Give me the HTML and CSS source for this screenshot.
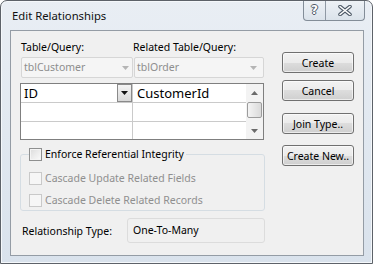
FILE: index.html
```html
<!DOCTYPE html>
<html lang="en">
<head>
    <meta charset="UTF-8">
    <meta name="viewport" content="width=device-width, initial-scale=1.0">
    <title>Edit Relationships</title>
    <link rel="stylesheet" href="styles.css">
</head>
<body>
    <div class="window">
        <div class="titlebar">
            <span class="title">Edit Relationships</span>
            <div class="caption-btns">
                <span class="cap-btn help">?</span>
                <span class="cap-btn close">
                    <svg width="14" height="11" viewBox="0 0 14 11">
                        <path d="M2 1.5 L12 9.5 M12 1.5 L2 9.5" stroke="#4e5a67" stroke-width="3.6" stroke-linecap="round"/>
                        <path d="M2 1.5 L12 9.5 M12 1.5 L2 9.5" stroke="#ffffff" stroke-width="1.6" stroke-linecap="round"/>
                    </svg>
                </span>
            </div>
        </div>

        <div class="client">
            <div class="main">
                <div class="labels">
                    <span class="label-left">Table/Query:</span>
                    <span>Related Table/Query:</span>
                </div>

                <div class="combos">
                    <div class="combo combo-left">
                        <span>tblCustomer</span>
                        <svg class="combo-arrow" width="7" height="4" viewBox="0 0 7 4"><path d="M0 0 H7 L3.5 4 Z" fill="#b5b5b5"/></svg>
                    </div>
                    <div class="combo combo-right">
                        <span>tblOrder</span>
                        <svg class="combo-arrow" width="7" height="4" viewBox="0 0 7 4"><path d="M0 0 H7 L3.5 4 Z" fill="#b5b5b5"/></svg>
                    </div>
                </div>

                <!-- Field mapping grid -->
                <div class="grid">
                    <div class="cells">
                        <div class="cell cell-first">
                            <span>ID</span>
                            <span class="drop-btn">
                                <svg width="7" height="4" viewBox="0 0 7 4"><path d="M0 0 H7 L3.5 4 Z" fill="#111"/></svg>
                            </span>
                        </div>
                        <div class="cell cell-second">CustomerId</div>
                        <div class="cell cell-first"></div>
                        <div class="cell cell-second"></div>
                        <div class="cell cell-first last"></div>
                        <div class="cell cell-second last"></div>
                    </div>
                    <div class="scrollbar">
                        <span class="scroll-arrow">
                            <svg width="7" height="4" viewBox="0 0 7 4"><path d="M0 4 H7 L3.5 0 Z" fill="#6b6b6b"/></svg>
                        </span>
                        <span class="scroll-thumb"></span>
                        <span class="scroll-track"></span>
                        <span class="scroll-arrow">
                            <svg width="7" height="4" viewBox="0 0 7 4"><path d="M0 0 H7 L3.5 4 Z" fill="#6b6b6b"/></svg>
                        </span>
                    </div>
                </div>

                <fieldset class="integrity">
                    <legend>
                        <label class="check">
                            <span class="box"></span>
                            <span>Enforce Referential Integrity</span>
                        </label>
                    </legend>
                    <div class="check-list">
                        <label class="check disabled">
                            <span class="box"></span>
                            <span>Cascade Update Related Fields</span>
                        </label>
                        <label class="check disabled">
                            <span class="box"></span>
                            <span>Cascade Delete Related Records</span>
                        </label>
                    </div>
                </fieldset>

                <div class="rel-type">
                    <span class="rel-label">Relationship Type:</span>
                    <div class="rel-value">One-To-Many</div>
                </div>
            </div>

            <div class="buttons">
                <button class="btn">Create</button>
                <button class="btn btn-cancel">Cancel</button>
                <button class="btn btn-join">Join Type..</button>
                <button class="btn btn-new">Create New..</button>
            </div>
        </div>
    </div>
</body>
</html>
```

FILE: styles.css
```css
body {
    margin: 0;
    padding: 0;
    font-family: "Noto Sans", "Open Sans", sans-serif;
    font-size: 10.5px;
    color: #000000;
}

.window {
    width: 373px;
    height: 264px;
    box-sizing: border-box;
    border: 1px solid #5d6269;
    border-radius: 7px 7px 0 0;
    background: linear-gradient(#e9eef4, #d9e2ec);
    box-shadow: inset 0 0 0 1px #f5f8fb;
    display: flex;
    flex-direction: column;
    overflow: hidden;
}

.titlebar {
    height: 29px;
    flex-shrink: 0;
    display: flex;
    justify-content: space-between;
    align-items: flex-start;
    padding-left: 11px;
}

.title {
    font-size: 11.3px;
    line-height: 16px;
    padding-top: 7px;
    color: #111111;
}

.caption-btns {
    display: flex;
    height: 20px;
    margin-top: -1px;
    margin-right: 7px;
    border: 1px solid #838d98;
    border-top: none;
    border-radius: 0 0 4px 4px;
    background: linear-gradient(#eef2f6, #dbe3eb);
    overflow: hidden;
}

.cap-btn {
    display: flex;
    align-items: center;
    justify-content: center;
}

.help {
    width: 21px;
    border-right: 1px solid #8f99a4;
    font-family: "DejaVu Sans", sans-serif;
    font-weight: bold;
    font-size: 12px;
    color: #ffffff;
    text-shadow: 1px 0 #4e5a67, -1px 0 #4e5a67, 0 1px #4e5a67, 0 -1px #4e5a67;
}

.close {
    width: 38px;
}

.client {
    flex: 1;
    margin: 0 8px 7px 9px;
    border: 1px solid #949ca5;
    background-color: #f0f0f0;
    display: flex;
    padding: 9px 0 0 9px;
}

.main {
    width: 245px;
}

.labels {
    display: flex;
    height: 15px;
    line-height: 15px;
}

.label-left {
    width: 112px;
    padding-left: 1px;
}

.combos {
    display: flex;
    gap: 1px;
    margin-top: 2px;
    padding-left: 1px;
}

.combo {
    height: 21px;
    box-sizing: border-box;
    border: 1px solid #d6d6d6;
    border-radius: 2px;
    background-color: #f5f5f5;
    color: #8e8e8e;
    line-height: 19px;
    padding-left: 2px;
    display: flex;
    justify-content: space-between;
    align-items: center;
}

.combo-left {
    width: 112px;
    padding-right: 3px;
}

.combo-right {
    width: 130px;
    padding-right: 6px;
}

.grid {
    margin-top: 5px;
    width: 244px;
    height: 57px;
    box-sizing: border-box;
    border: 1px solid #7f7f7f;
    background-color: #ffffff;
    display: flex;
    font-size: 13px;
    overflow: hidden;
}

.cells {
    flex: 1;
    display: grid;
    grid-template-columns: 112px 1fr;
    grid-auto-rows: 19px;
}

.cell {
    box-sizing: border-box;
    border-bottom: 1px solid #cacaca;
    line-height: 18px;
}

.cell.last {
    border-bottom: none;
}

.cell-first {
    border-right: 1px solid #cacaca;
    padding-left: 3px;
    display: flex;
    justify-content: space-between;
}

.cell-second {
    padding-left: 4px;
}

.drop-btn {
    width: 15px;
    height: 18px;
    box-sizing: border-box;
    border: 1px solid #8a8a8a;
    background: linear-gradient(#f4f4f4, #d8d8d8);
    display: flex;
    align-items: center;
    justify-content: center;
}

.scrollbar {
    width: 17px;
    display: flex;
    flex-direction: column;
    background-color: #f3f3f3;
}

.scroll-arrow {
    height: 17px;
    display: flex;
    align-items: center;
    justify-content: center;
}

.scroll-thumb {
    height: 16px;
    margin: 1px 1px 0;
    box-sizing: border-box;
    border: 1px solid #9c9c9c;
    border-radius: 2px;
    background: linear-gradient(to right, #f4f4f4, #dadada);
}

.scroll-track {
    flex: 1;
}

.integrity {
    margin: 7px 0 0 0;
    padding: 0 0 3px 8px;
    min-width: 0;
    border: 1px solid #d5dde3;
    border-radius: 3px;
}

.integrity legend {
    padding: 0 2px 0 0;
    line-height: 14px;
}

.check {
    display: flex;
    align-items: center;
    gap: 3px;
    line-height: 14px;
}

.box {
    width: 13px;
    height: 13px;
    box-sizing: border-box;
    border: 1px solid #8e8f8f;
    background: linear-gradient(135deg, #dcdcdc, #fbfbfb);
    box-shadow: inset 0 0 0 1px #f4f4f4;
}

.check-list {
    display: flex;
    flex-direction: column;
    gap: 8px;
    padding-top: 10px;
}

.check.disabled {
    color: #8f8f8f;
}

.check.disabled .box {
    border-color: #c9c9c9;
    background: #f6f6f6;
    box-shadow: none;
}

.rel-type {
    display: flex;
    align-items: center;
    margin-top: 7px;
}

.rel-label {
    width: 105px;
    padding-left: 2px;
}

.rel-value {
    width: 138px;
    height: 25px;
    box-sizing: border-box;
    border: 1px solid #dcdcdc;
    border-radius: 3px;
    line-height: 23px;
    padding-left: 5px;
}

.buttons {
    display: flex;
    flex-direction: column;
    margin-left: 17px;
    padding-top: 12px;
}

.btn {
    width: 72px;
    height: 21px;
    padding: 0;
    border: 1px solid #707070;
    border-radius: 3px;
    background: linear-gradient(#f2f2f2 0%, #ebebeb 50%, #dddddd 50%, #cfcfcf 100%);
    box-shadow: inset 0 0 0 1px rgba(255, 255, 255, 0.6);
    font-family: inherit;
    font-size: 10.5px;
    color: #000000;
}

.btn-cancel {
    margin-top: 7px;
}

.btn-join {
    margin-top: 12px;
}

.btn-new {
    margin-top: 11px;
}
```
